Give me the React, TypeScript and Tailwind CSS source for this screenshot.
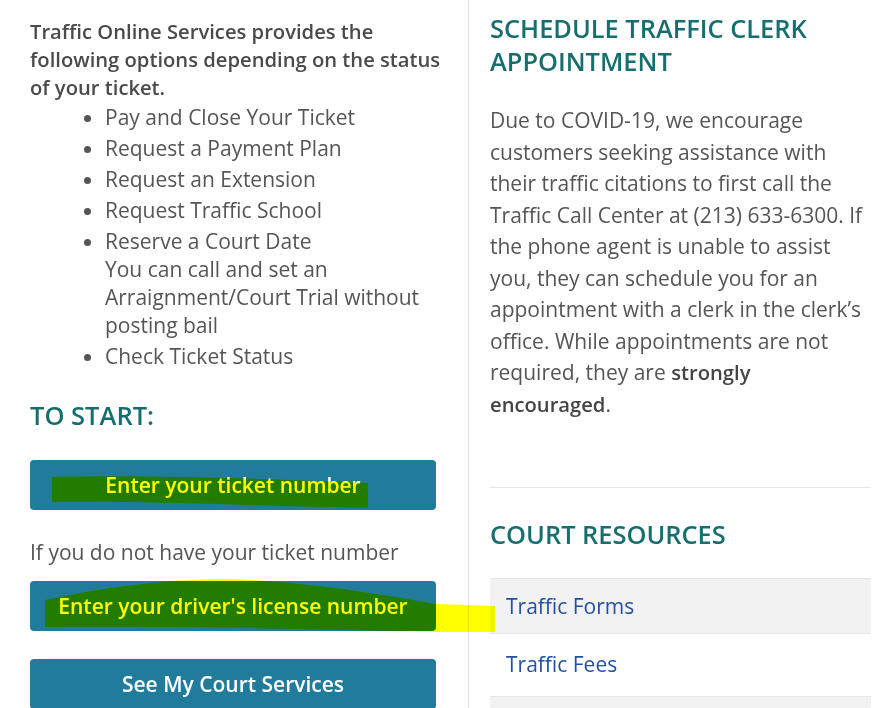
import React from 'react';

const options = [
  'Pay and Close Your Ticket',
  'Request a Payment Plan',
  'Request an Extension',
  'Request Traffic School',
];

const resources = ['Traffic Forms', 'Traffic Fees', 'Traffic School'];

function ActionButton({ label }: { label: string }) {
  return (
    <button className="w-full h-[50px] rounded-[4px] bg-[#217c9c] text-white text-[21px] font-semibold leading-none">
      {label}
    </button>
  );
}

export default function App() {
  return (
    <div className="relative h-[708px] overflow-hidden bg-white font-['Open_Sans',sans-serif] text-[#555]">
      <div className="flex h-full">
        {/* left column */}
        <div className="ml-[30px] w-[406px] pt-[17px]">
          <p className="w-[420px] text-[20.2px] leading-[28px] font-semibold text-[#4a4a4a]">
            Traffic Online Services provides the following options depending on the status of your ticket.
          </p>
          <ul className="mt-[2px] list-disc pl-[75px] text-[21px] leading-[28px] marker:text-[#555]">
            {options.map((o) => (
              <li key={o} className="mb-[3px]">
                {o}
              </li>
            ))}
            <li className="mb-[3px]">
              Reserve a Court Date
              <br />
              You can call and set an Arraignment/Court Trial without posting bail
            </li>
            <li>Check Ticket Status</li>
          </ul>

          <h2 className="mt-[29px] text-[25.5px] leading-[32px] font-semibold text-[#176e6e]">TO START:</h2>

          <div className="mt-[29px]">
            <ActionButton label="Enter your ticket number" />
          </div>
          <p className="mt-[28px] text-[21px] leading-[28px]">If you do not have your ticket number</p>
          <div className="mt-[15px]">
            <ActionButton label="Enter your driver's license number" />
          </div>
          <div className="mt-[28px]">
            <ActionButton label="See My Court Services" />
          </div>
        </div>

        {/* divider */}
        <div className="ml-[32px] w-px bg-[#e3e3e3]" />

        {/* right column */}
        <div className="ml-[21px] w-[381px] pt-[12px]">
          <h2 className="text-[25.4px] leading-[33px] font-semibold text-[#176e6e]">
            SCHEDULE TRAFFIC CLERK APPOINTMENT
          </h2>
          <p className="mt-[27px] text-[21px] leading-[31.5px]">
            Due to COVID-19, we encourage customers seeking assistance with their traffic citations to first call
            the Traffic Call Center at (213) 633-6300. If the phone agent is unable to assist you, they can schedule
            you for an appointment with a clerk in the clerk’s office. While appointments are not required, they are{' '}
            <strong className="text-[20.2px] font-semibold text-[#444]">strongly encouraged</strong>.
          </p>
          <hr className="mt-[67px] border-0 border-t border-[#e5e5e5]" />
          <h2 className="mt-[30px] text-[25.4px] leading-[33px] font-semibold text-[#176e6e]">COURT RESOURCES</h2>
          <ul className="mt-[27px]">
            {resources.map((r, i) => (
              <li
                key={r}
                className={`border-t border-[#e6e6e6] pl-[16px] text-[21px] leading-[28px] text-[#2350a5] ${
                  i % 2 === 0 ? 'bg-[#f2f2f2] h-[55px] pt-[13px]' : 'bg-white h-[63px] pt-[16px]'
                }`}
              >
                {r}
              </li>
            ))}
          </ul>
        </div>
      </div>

      {/* highlighter marks */}
      <svg
        className="pointer-events-none absolute inset-0 mix-blend-multiply"
        width="887"
        height="708"
        viewBox="0 0 887 708"
      >
        <path d="M52,477 C140,475 250,478 368,483 L368,508 C260,506 150,501 52,502 Z" fill="#ffff00" />
        <path
          d="M45,600 C100,588 160,580 215,579 C280,579 360,590 436,604 L495,606 L495,632 L436,632 C340,630 200,626 45,627 Z"
          fill="#ffff00"
        />
      </svg>
    </div>
  );
}
